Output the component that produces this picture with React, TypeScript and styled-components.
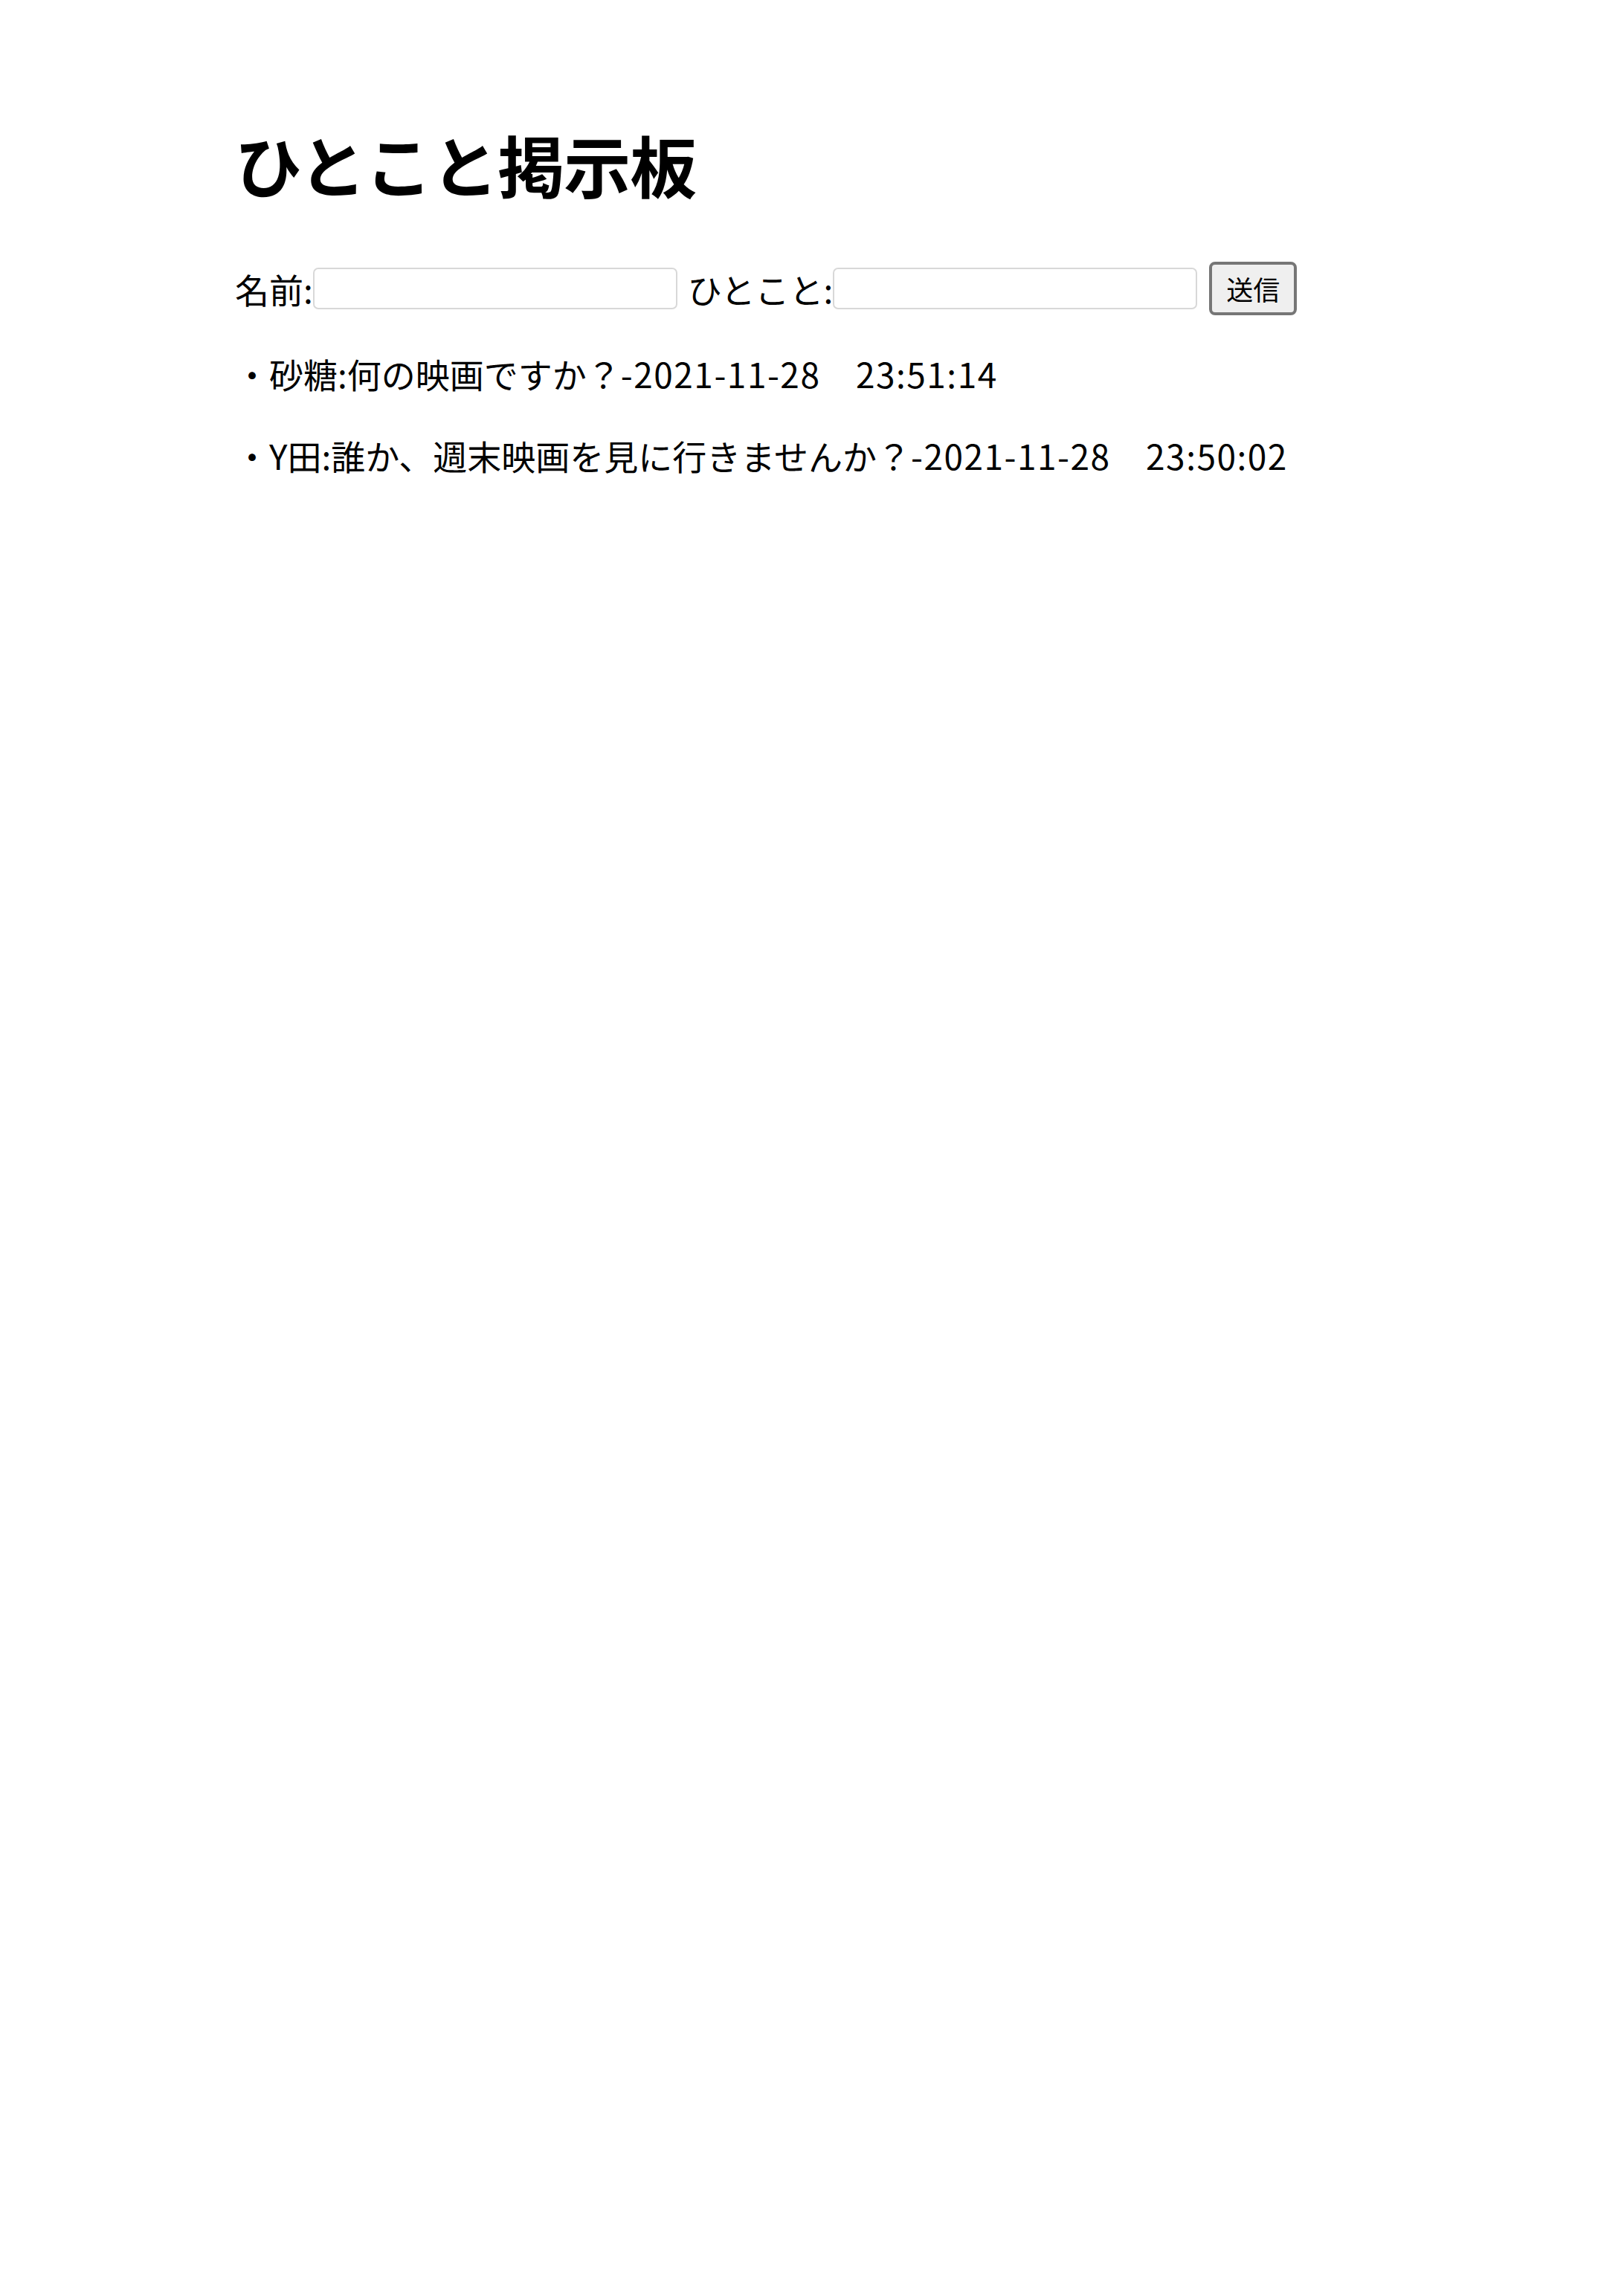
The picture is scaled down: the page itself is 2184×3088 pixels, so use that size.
import React from "react";
import styled, { createGlobalStyle } from "styled-components";

const GlobalStyle = createGlobalStyle`
  html, body {
    margin: 0;
    padding: 0;
    background: #ffffff;
  }
  body {
    font-family: "Noto Sans CJK JP", "Noto Sans", sans-serif;
    color: #000000;
  }
`;

const Page = styled.div`
  width: 2184px;
  min-height: 3088px;
  box-sizing: border-box;
  padding: 166px 320px 0 316px;
  font-size: 46px;
`;

const Title = styled.h1`
  font-size: 90px;
  font-weight: 700;
  line-height: 1.2;
  margin: 0 0 78px 0;
  letter-spacing: -1px;
`;

const Form = styled.form`
  display: flex;
  align-items: center;
  margin-bottom: 44px;
`;

const Label = styled.label`
  font-size: 46px;
  line-height: 1;
  white-space: nowrap;
`;

const Field = styled.input`
  width: 490px;
  height: 56px;
  box-sizing: border-box;
  margin: 0 14px 0 0;
  border: 2px solid #d8d8d8;
  border-radius: 7px;
  background: #ffffff;
  outline: none;
  font-size: 34px;
  padding: 0 8px;
`;

const SendButton = styled.button`
  width: 118px;
  height: 72px;
  box-sizing: border-box;
  margin-left: 2px;
  border: 4px solid #767676;
  border-radius: 8px;
  background: #efefef;
  font-family: "Noto Sans CJK JP", sans-serif;
  font-size: 36px;
  color: #000000;
  padding: 0;
  line-height: 1;
`;

const Posts = styled.div`
  display: flex;
  flex-direction: column;
  gap: 42px;
`;

const Post = styled.p`
  margin: 0;
  font-size: 46px;
  line-height: 68px;
  white-space: nowrap;
`;

const Stamp = styled.span`
  letter-spacing: 1.5px;
`;

type Entry = { name: string; text: string; at: string };

const entries: Entry[] = [
  { name: "砂糖", text: "何の映画ですか？", at: "2021-11-28　23:51:14" },
  { name: "Y田", text: "誰か、週末映画を見に行きませんか？", at: "2021-11-28　23:50:02" },
];

export default function App() {
  return (
    <>
      <GlobalStyle />
      <Page>
        <Title>ひとこと掲示板</Title>
        <Form onSubmit={(e) => e.preventDefault()}>
          <Label htmlFor="name">名前:</Label>
          <Field id="name" type="text" />
          <Label htmlFor="msg">ひとこと:</Label>
          <Field id="msg" type="text" />
          <SendButton type="submit">送信</SendButton>
        </Form>
        <Posts>
          {entries.map((e) => (
            <Post key={e.at}>
              ・{e.name}:{e.text}
              <Stamp>-{e.at}</Stamp>
            </Post>
          ))}
        </Posts>
      </Page>
    </>
  );
}
